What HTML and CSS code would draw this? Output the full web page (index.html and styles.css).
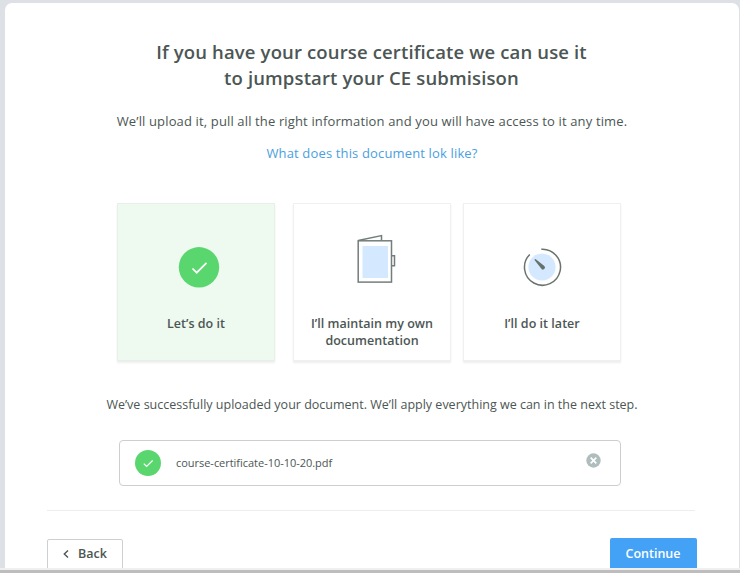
FILE: index.html
```html
<!DOCTYPE html>
<html lang="en">
<head>
<meta charset="utf-8">
<title>Course certificate</title>
<link rel="stylesheet" href="styles.css">
</head>
<body>
<main class="panel">
  <h1 class="title">If you have your course certificate we can use it<br>to jumpstart your CE submisison</h1>
  <p class="intro">We’ll upload it, pull all the right information and you will have access to it any time.</p>
  <a class="help">What does this document lok like?</a>

  <section class="options">
    <div class="option option-selected">
      <svg class="option-icon" width="50" height="60" viewBox="0 0 50 60"><circle cx="28" cy="34.300" r="20.200" fill="#5ad66f"/><path d="M21.500 35.500l4.200 4.200 9.800-9.800" fill="none" stroke="#fff" stroke-width="1.700"/></svg>
      <span class="option-label">Let’s do it</span>
    </div>
    <div class="option option-second">
      <svg class="option-icon" width="50" height="60" viewBox="0 0 50 60"><rect x="15.500" y="13" width="25.500" height="32" fill="#d4e9ff"/><g fill="none" stroke="#737e7c" stroke-width="1.500"><rect x="11.200" y="7.800" width="33.300" height="41.300"/><path d="M11.200 7.500L34.500 2.600V7.800M44.500 22.800h3v10h-3"/></g></svg>
      <span class="option-label">I’ll maintain my own<br>documentation</span>
    </div>
    <div class="option">
      <svg class="option-icon" width="50" height="60" viewBox="0 0 50 60"><circle cx="25" cy="34" r="13.600" fill="#d4e9ff"/><path d="M24.300 16.300A18 18 0 1 1 12.800 21.500" fill="none" stroke="#68736f" stroke-width="1.500"/><path d="M17.300 26.700l1.200-.8 8.800 7.100a2 2 0 0 1-2.700 3z" fill="#66716e"/></svg>
      <span class="option-label">I’ll do it later</span>
    </div>
  </section>

  <p class="status">We’ve successfully uploaded your document. We’ll apply everything we can in the next step.</p>

  <div class="file">
    <svg width="26" height="26" viewBox="0 0 26 26"><circle cx="13" cy="13" r="13" fill="#5ad66f"/><path d="M8.800 13.700l2.800 2.800 6-6" fill="none" stroke="#fff" stroke-width="1.200"/></svg>
    <span class="file-name">course-certificate-10-10-20.pdf</span>
    <svg class="remove" width="16" height="16" viewBox="0 0 16 16"><circle cx="8.500" cy="7.500" r="7.200" fill="#afbdbd"/><path d="M5.700 4.700l5.600 5.600M11.300 4.700l-5.600 5.600" stroke="#fff" stroke-width="1.700"/></svg>
  </div>

  <hr class="divider">
  <footer class="actions">
    <button class="button back"><svg width="6" height="8" viewBox="0 0 6 8"><path d="M5 .5L1.300 4 5 7.500" fill="none" stroke="#4c5654" stroke-width="1.400"/></svg><span class="back-label">Back</span></button>
    <button class="button continue">Continue</button>
  </footer>
</main>
<div class="bottom-edge"></div>
</body>
</html>
```
FILE: styles.css
```css
* { box-sizing: border-box; }
html, body { height: 100%; }
body {
  margin: 0;
  overflow: hidden;
  display: flex;
  flex-direction: column;
  padding-top: 3px;
  background: #dde1e5;
  color: #4c5654;
  font-family: "Open Sans", "Noto Sans", sans-serif;
}
.panel {
  flex: 0 0 565px;
  margin: 0 1px 0 5px;
  padding: 36px 43px 0 42px;
  border-radius: 7px 7px 0 0;
  background: #fff;
  text-align: center;
  overflow: hidden;
}
.title { margin: 0; font-size: 18.5px; line-height: 26px; font-weight: 600; letter-spacing: 0.14px; }
.intro { margin: 20px 0 0 1px; font-size: 13px; line-height: 20px; letter-spacing: 0.14px; }
.help { display: block; margin: 12px 0 0 1px; font-size: 13px; line-height: 20px; letter-spacing: 0.15px; color: #4aa0e0; }
.options { display: flex; margin: 40px 0 0 70px; }
.option {
  width: 158px;
  height: 158px;
  margin-right: 12px;
  padding-top: 29px;
  border: 1px solid #f0f0f0;
  background: #fff;
  box-shadow: 0 2px 2px rgba(0, 0, 0, 0.07);
}
.option-selected { margin-right: 18px; background: #eef9f0; border-color: #e6efe8; }
.option-icon { display: block; margin: 0 auto; }
.option-label { display: block; margin-top: 22px; font-size: 12.5px; line-height: 17px; font-weight: 600; letter-spacing: 0.03px; }
.status { margin: 34px 0 0 1px; font-size: 12.5px; line-height: 20px; }
.file {
  display: flex;
  align-items: center;
  width: 502px;
  height: 46px;
  margin: 25px 0 0 72px;
  padding: 0 19px 0 15px;
  border: 1px solid #cecece;
  border-radius: 4px;
}
.file-name { margin: 0 0 2px 15px; font-size: 11px; letter-spacing: -0.03px; }
.remove { margin: -5px 0 0 auto; }
.divider { height: 1px; margin: 24px 1px 0 0; border: 0; background: #ededed; }
.actions { display: flex; justify-content: space-between; margin: 0 -1px 0 0; padding-top: 27px; }
.button { height: 36px; border: 0; border-radius: 2px; font: 600 12.5px/20px "Open Sans", "Noto Sans", sans-serif; color: #4c5654; padding: 0; }
.back { display: flex; align-items: center; width: 76px; margin-top: 1px; padding: 0 0 6px 15px; border: 1px solid #cdd0d0; background: #fff; }
.back-label { margin-left: 9px; }
.continue { width: 87px; padding: 0 1px 4px 0; background: #43a2f5; color: #fff; }
.bottom-edge { height: 5px; border-top: 2px solid #f0f0f0; background: #bdbdbd; }
```
